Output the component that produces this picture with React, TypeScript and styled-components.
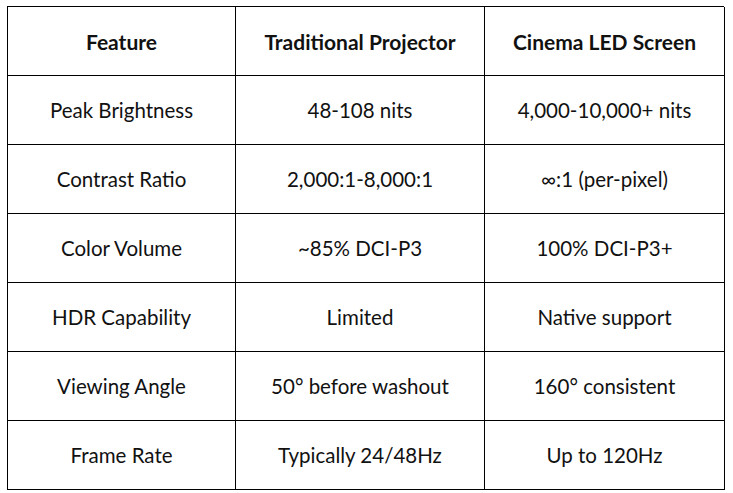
import React from 'react'
import styled, { createGlobalStyle } from 'styled-components'

const GlobalStyle = createGlobalStyle`
  html, body {
    margin: 0;
    padding: 0;
    background: #ffffff;
  }
`

const Page = styled.div`
  padding: 6px 0 0 7px;
  width: 733px;
  height: 493px;
  box-sizing: border-box;
  background: #ffffff;
`

const Table = styled.div`
  display: grid;
  grid-template-columns: 228px 249px 240px;
  grid-auto-rows: 69px;
  width: 717px;
  border-top: 1.5px solid #000;
  border-left: 1.5px solid #000;
  box-sizing: border-box;
`

const Cell = styled.div<{ $head?: boolean }>`
  display: flex;
  align-items: center;
  justify-content: center;
  border-right: 1.5px solid #000;
  border-bottom: 1.5px solid #000;
  font-family: Lato, 'Open Sans', sans-serif;
  font-size: ${(p) => (p.$head ? '21px' : '20.5px')};
  font-weight: ${(p) => (p.$head ? 700 : 400)};
  color: #111;
  white-space: nowrap;
`

const header = ['Feature', 'Traditional Projector', 'Cinema LED Screen']

const rows = [
  ['Peak Brightness', '48-108 nits', '4,000-10,000+ nits'],
  ['Contrast Ratio', '2,000:1-8,000:1', '∞:1 (per-pixel)'],
  ['Color Volume', '~85% DCI-P3', '100% DCI-P3+'],
  ['HDR Capability', 'Limited', 'Native support'],
  ['Viewing Angle', '50° before washout', '160° consistent'],
  ['Frame Rate', 'Typically 24/48Hz', 'Up to 120Hz'],
]

const App = () => {
  return (
    <Page>
      <GlobalStyle />
      <Table>
        {header.map((h) => (
          <Cell key={h} $head>
            {h}
          </Cell>
        ))}
        {rows.map((r) =>
          r.map((c, i) => <Cell key={r[0] + i}>{c}</Cell>)
        )}
      </Table>
    </Page>
  )
}

export default App
